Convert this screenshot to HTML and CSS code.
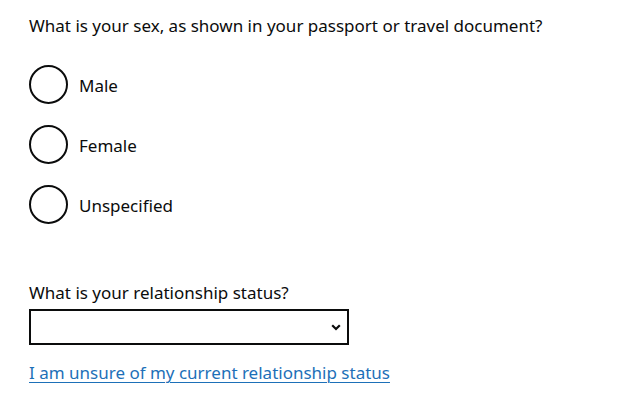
FILE: index.html
```html
<!DOCTYPE html>
<html lang="en">
<head>
<meta charset="utf-8">
<title>Passport details</title>
<link rel="stylesheet" href="styles.css">
</head>
<body>
<main class="page">
  <fieldset class="fieldset">
    <legend class="legend">What is your sex, as shown in your passport or travel document?</legend>
    <div class="radios">
      <label class="radio"><input class="radio-input" type="radio" name="sex" value="male"><span class="radio-label">Male</span></label>
      <label class="radio"><input class="radio-input" type="radio" name="sex" value="female"><span class="radio-label">Female</span></label>
      <label class="radio"><input class="radio-input" type="radio" name="sex" value="unspecified"><span class="radio-label">Unspecified</span></label>
    </div>
  </fieldset>
  <div class="form-group">
    <label class="label" for="rel">What is your relationship status?</label>
    <div class="select-wrap">
      <select class="select" id="rel"><option></option></select>
      <svg class="chevron" width="10" height="7" viewBox="0 0 10 7" aria-hidden="true"><path d="M1.2 1.2 L5 5 L8.8 1.2" fill="none" stroke="#0b0c0c" stroke-width="2.2"/></svg>
    </div>
    <a class="link" href="#">I am unsure of my current relationship status</a>
  </div>
</main>
</body>
</html>
```
FILE: styles.css
```css
html, body { margin: 0; padding: 0; background: #fff; }
body {
  font-family: "Noto Sans", "Liberation Sans", sans-serif;
  font-size: 17px;
  line-height: 25px;
  color: #0b0c0c;
}
.page { padding: 13px 29px; }
.fieldset { border: 0; margin: 0; padding: 0; min-width: 0; }
.legend { padding: 0; margin: 0 0 27px; font-size: 17px; line-height: 25px; }
.radios { display: flex; flex-direction: column; gap: 21px; }
.radio { display: flex; align-items: center; gap: 11px; cursor: pointer; }
.radio-input {
  appearance: none; -webkit-appearance: none;
  width: 39px; height: 39px; margin: 0;
  border: 2px solid #0b0c0c; border-radius: 50%;
  background: #fff; flex: none; box-sizing: border-box;
}
.radio-label { line-height: 25px; padding-top: 2px; }
.form-group { margin-top: 56px; display: flex; flex-direction: column; align-items: flex-start; }
.label { display: block; margin-bottom: 4px; }
.select-wrap { position: relative; width: 320px; height: 36px; }
.select {
  appearance: none; -webkit-appearance: none;
  width: 100%; height: 100%; box-sizing: border-box;
  border: 2px solid #0b0c0c; border-radius: 0; background: #fff;
  font: inherit; color: #0b0c0c; padding: 0 30px 0 5px; margin: 0;
}
.chevron { position: absolute; right: 8px; top: 15px; pointer-events: none; }
.link {
  margin-top: 15px; color: #1d70b8; text-decoration: underline;
  text-decoration-thickness: 1px; text-underline-offset: 3px;
}
```
